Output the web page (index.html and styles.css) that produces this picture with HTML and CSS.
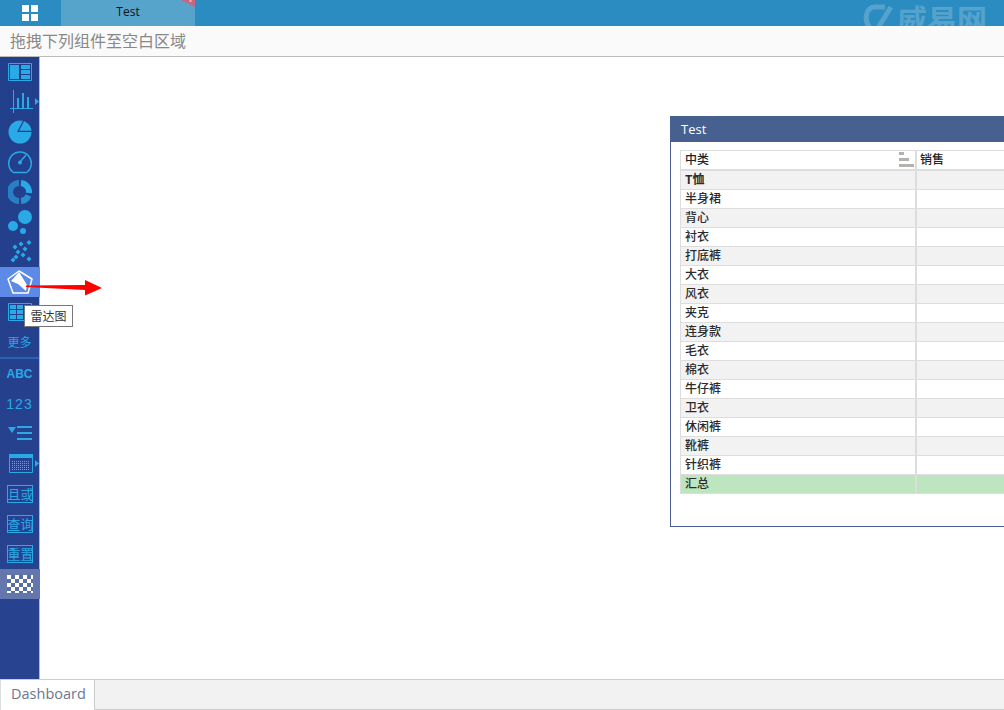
FILE: index.html
```html
<!DOCTYPE html>
<html lang="zh">
<head>
<meta charset="utf-8">
<title>Dashboard</title>
<link rel="stylesheet" href="styles.css">
</head>
<body>
<div class="app">
  <header class="topbar">
    <div class="home">
      <svg width="16" height="16" viewBox="0 0 16 16"><path fill="#fff" d="M0 0h7v7H0zM9 0h7v7H9zM0 9h7v7H0zM9 9h7v7H9z"/></svg>
    </div>
    <div class="tab">Test
      <svg class="ribbon" width="14" height="8" viewBox="0 0 14 8"><path fill="#c9667f" d="M0 0h14v7z"/><path stroke="#eec4cf" d="M8.500 0l2 2M10.500 0l-2 2"/></svg>
    </div>
  </header>
  <div class="hintbar">拖拽下列组件至空白区域</div>
  <div class="main">
    <nav class="sidebar">
      <div class="item"><svg width="24" height="18" viewBox="0 0 24 18"><path fill="none" stroke="#29a9e6" d="M.5.5h23v17H.5z"/><path fill="#29a9e6" d="M2 2h9v14H2zM13 2h9v4h-9zM13 7h9v4h-9zM13 12h9v4h-9z"/></svg></div>
      <div class="item"><svg width="38" height="24" viewBox="0 0 38 24"><path fill="none" stroke="#29a9e6" d="M12.500 0v23M9 18.500h23"/><path fill="#29a9e6" d="M16 8h2v10h-2zM21 3h2v15h-2zM26 7h2v11h-2zM34 8l4 3.500-4 3.500z"/></svg></div>
      <div class="item"><svg width="24" height="24" viewBox="0 0 24 24"><circle cx="12" cy="12" r="11.500" fill="#29a9e6"/><path fill="none" stroke="#223f8c" stroke-width="1.200" d="M15.500 1L10 11.400h14"/></svg></div>
      <div class="item"><svg width="24" height="24" viewBox="0 0 24 24"><path fill="none" stroke="#29a9e6" stroke-width="1.500" d="M5.500 22.500a11.300 11.300 0 1 1 13 0z"/><path fill="none" stroke="#29a9e6" stroke-width="1.500" d="M12 12l6-7"/><circle cx="12" cy="12.500" r="2" fill="#29a9e6"/></svg></div>
      <div class="item"><svg width="24" height="24" viewBox="0 0 24 24"><path fill="none" stroke="#2a7fc4" stroke-width="6" d="M11 3a9 9 0 0 0 0 18"/><path fill="none" stroke="#29a9e6" stroke-width="6" d="M13 3a9 9 0 0 1 8 10"/><path fill="none" stroke="#2a8ed0" stroke-width="6" d="M20.500 15.500a9 9 0 0 1-7.500 5.500"/></svg></div>
      <div class="item"><svg width="24" height="24" viewBox="0 0 24 24"><circle cx="17" cy="7" r="7" fill="#29a9e6"/><circle cx="5" cy="16" r="5" fill="#29a9e6"/><circle cx="15" cy="21" r="3" fill="#29a9e6"/></svg></div>
      <div class="item"><svg width="24" height="24" viewBox="0 0 24 24"><g fill="#29a9e6"><path d="M7 4.500l2.500 2.500L7 9.500 4.500 7zM13 1.500L15.500 4 13 6.500 10.500 4zM17 6.500L19.500 9 17 11.500 14.500 9zM21 0l2.500 2.500L21 5l-2.500-2.500zM15 12.500l2.500 2.500-2.500 2.500-2.500-2.500zM10 9.500l2.500 2.500-2.500 2.500L7.500 12zM5 17.500L7.500 20 5 22.500 2.500 20zM21 16.500l2.500 2.500-2.500 2.500-2.500-2.500zM8 14.500l2.500 2.500L8 19.500 5.500 17z"/></g></svg></div>
      <div class="item item-active"><svg width="26" height="26" viewBox="0 0 26 26"><path fill="none" stroke="#fff" stroke-width="1.500" stroke-linejoin="round" d="M12 2L25 10 21 24H6L1 10z"/><path fill="#fff" d="M12 3L20 16 19 22 11 15 4 12z"/></svg></div>
      <div class="item"><svg width="24" height="18" viewBox="0 0 24 18"><path fill="none" stroke="#29a9e6" d="M.5.500h23v17H.5z"/><path fill="#29a9e6" d="M2 2h6v4H2zM9 2h6v4H9zM16 2h6v4h-6zM2 7h6v4H2zM9 7h6v4H9zM16 7h6v4h-6zM2 12h6v4H2zM9 12h6v4H9zM16 12h6v4h-6z"/></svg></div>
      <div class="item item-text">更多</div>
      <div class="divider"></div>
      <div class="item item-abc">ABC</div>
      <div class="item item-num">123</div>
      <div class="item"><svg width="24" height="16" viewBox="0 0 24 16"><path fill="#29a9e6" d="M0 1h8l-4 6zM9 0h15v2H9zM9 6h15v2H9zM9 12h15v2H9z"/></svg></div>
      <div class="item"><svg width="38" height="20" viewBox="0 0 38 20"><path fill="#29a9e6" d="M8 0h24v4H8z"/><path fill="none" stroke="#29a9e6" d="M8.500 3.500h23v15h-23z"/><path fill="none" stroke="#6f9fd6" stroke-dasharray="1 1" d="M11 7.500h18M11 9.500h18M11 11.500h18M11 13.500h18M11 15.500h18"/><path fill="#29a9e6" d="M34 6l4 3.500-4 3.500z"/></svg></div>
      <div class="item"><span class="boxed">且或</span></div>
      <div class="item"><span class="boxed">查询</span></div>
      <div class="item"><span class="boxed">重置</span></div>
      <div class="item item-checker"><span class="checker"></span></div>
    </nav>
    <section class="canvas">
      <div class="panel">
        <div class="panel-title">Test</div>
        <div class="table">
          <div class="row row-head">
            <div class="cell cell-name">中类
              <span class="sort"><i class="s1"></i><i class="s2"></i><i class="s3"></i></span>
            </div>
            <div class="cell">销售</div>
          </div>
          <div class="row alt"><div class="cell cell-name strong">T恤</div><div class="cell"></div></div>
          <div class="row"><div class="cell cell-name">半身裙</div><div class="cell"></div></div>
          <div class="row alt"><div class="cell cell-name">背心</div><div class="cell"></div></div>
          <div class="row"><div class="cell cell-name">衬衣</div><div class="cell"></div></div>
          <div class="row alt"><div class="cell cell-name">打底裤</div><div class="cell"></div></div>
          <div class="row"><div class="cell cell-name">大衣</div><div class="cell"></div></div>
          <div class="row alt"><div class="cell cell-name">风衣</div><div class="cell"></div></div>
          <div class="row"><div class="cell cell-name">夹克</div><div class="cell"></div></div>
          <div class="row alt"><div class="cell cell-name">连身款</div><div class="cell"></div></div>
          <div class="row"><div class="cell cell-name">毛衣</div><div class="cell"></div></div>
          <div class="row alt"><div class="cell cell-name">棉衣</div><div class="cell"></div></div>
          <div class="row"><div class="cell cell-name">牛仔裤</div><div class="cell"></div></div>
          <div class="row alt"><div class="cell cell-name">卫衣</div><div class="cell"></div></div>
          <div class="row"><div class="cell cell-name">休闲裤</div><div class="cell"></div></div>
          <div class="row alt"><div class="cell cell-name">靴裤</div><div class="cell"></div></div>
          <div class="row"><div class="cell cell-name">针织裤</div><div class="cell"></div></div>
          <div class="row total"><div class="cell cell-name">汇总</div><div class="cell"></div></div>
        </div>
      </div>
    </section>
  </div>
  <footer class="bottombar">
    <div class="sheet-tab">Dashboard</div>
    <div class="sheet-rest"></div>
  </footer>
  <svg class="arrow" width="78" height="18" viewBox="0 0 78 18"><path fill="#fe0000" d="M0 6.500L59 6V1L76 9 59 16.500V11L0 8z"/></svg>
  <div class="tooltip">雷达图</div>
  <div class="watermark">
    <svg width="30" height="30" viewBox="0 0 30 30"><path fill="none" stroke="#fff" stroke-width="5" d="M22 4H12Q5 4 3.500 12T8 26M28 4L13 28"/></svg>
    <span>威易网</span>
  </div>
</div>
</body>
</html>
```
FILE: styles.css
```css
* { box-sizing: border-box; }
html, body { margin: 0; height: 100%; overflow: hidden; background: #fff; }
body { font-family: "Open Sans", "Noto Sans CJK SC", sans-serif; }
.app { position: relative; width: 1004px; height: 710px; overflow: hidden; display: flex; flex-direction: column; }

.topbar { height: 26px; flex: none; display: flex; background: #2a8cc0; }
.home { width: 61px; display: flex; align-items: center; justify-content: center; padding-right: 2px; }
.tab { position: relative; width: 134px; background: #56a3cb; color: #111; font-size: 12px; line-height: 24px; text-align: center; }
.ribbon { position: absolute; top: 0; right: 0; }

.hintbar { height: 31px; flex: none; background: #fafafa; border-bottom: 1px solid #bbb; color: #888; font: 16px/29px "Noto Sans CJK SC", sans-serif; padding-left: 10px; }

.main { flex: 1; min-height: 0; display: flex; }
.sidebar { width: 40px; flex: none; display: flex; flex-direction: column; background: linear-gradient(#223f8c, #28438f); border-right: 1px solid #aebbd8; }
.item { height: 30px; flex: none; display: flex; align-items: center; justify-content: center; color: #29a9e6; font-family: "Noto Sans CJK SC", sans-serif; }
.item-active { background: #5c8ae6; margin-right: -1px; }
.item-checker { background: #6477ad; margin-right: -1px; }
.item-text { font-size: 12px; padding-bottom: 2px; }
.item-abc { font: bold 12px "Liberation Sans", sans-serif; }
.item-num { font: 14px "Liberation Sans", sans-serif; letter-spacing: 1px; padding-bottom: 1px; }
.divider { height: 2px; flex: none; background: #2b62b8; }
.boxed { width: 26px; height: 18px; border: 1px solid #29a9e6; font-size: 13px; line-height: 15px; text-align: center; white-space: nowrap; overflow: hidden; }
.checker { width: 26px; height: 18px; background-color: #fff; background-image: conic-gradient(#5a6ea6 25%, transparent 0 50%, #5a6ea6 0 75%, transparent 0); background-size: 8px 8px; }

.canvas { position: relative; flex: 1; min-width: 0; background: #fff; }
.panel { position: absolute; left: 630px; top: 59px; width: 420px; height: 411px; border: 1px solid #46608f; }
.panel-title { height: 25px; background: #46608f; color: #fff; font-size: 13px; line-height: 24px; padding-left: 10px; }
.table { margin: 8px 0 0 9px; border-top: 1px solid #ddd; border-left: 1px solid #ddd; font: 500 12px/16px "Noto Sans CJK SC", sans-serif; color: #2b2b2b; }
.row { display: flex; height: 19px; border-bottom: 1px solid #ddd; background: #fff; }
.row-head { height: 20px; border-bottom-width: 2px; color: #222; }
.alt { background: #f2f2f2; }
.total { background: #bce5c0; }
.cell { flex: 1; padding-left: 3px; white-space: nowrap; }
.cell-name { flex: none; width: 236px; padding-left: 4px; border-right: 2px solid #ddd; display: flex; justify-content: space-between; }
.strong { font-weight: 700; }
.sort { display: flex; flex-direction: column; width: 15px; margin-right: 1px; gap: 3px; padding-top: 1px; }
.sort i { display: block; height: 3px; background: #b3b3ad; }
.s1 { width: 5px; }
.s2 { width: 10px; }
.s3 { width: 15px; }

.bottombar { height: 31px; flex: none; display: flex; border-top: 1px solid #ccc; }
.sheet-tab { width: 95px; background: #fff; color: #6e7690; font-size: 14.500px; line-height: 27px; padding-left: 10px; border-right: 1px solid #ccc; border-left: 1px solid #ddd; }
.sheet-rest { flex: 1; background: #f2f2f2; border-bottom: 1px solid #ccc; }

.arrow { position: absolute; left: 26px; top: 279px; }
.tooltip { position: absolute; left: 24px; top: 305px; width: 49px; height: 22px; background: #fff; border: 1px solid #777; color: #333; font: 12px/19px "Noto Sans CJK SC", sans-serif; text-align: center; }
.watermark { position: absolute; left: 863px; top: 0; display: flex; align-items: center; gap: 4px; opacity: .2; color: #fff; font: 700 30px/36px "Noto Sans CJK SC", sans-serif; pointer-events: none; }
```
